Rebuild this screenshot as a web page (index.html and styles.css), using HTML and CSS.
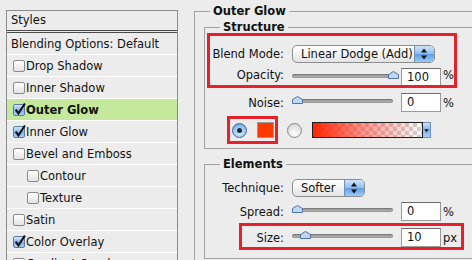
FILE: index.html
```html
<!DOCTYPE html>
<html lang="en">
<head>
  <meta charset="UTF-8">
  <title>Layer Style</title>
  <link rel="stylesheet" href="styles.css">
</head>
<body>
<div class="window">
  <div class="styles-panel">
    <div class="panel-head">Styles</div>
    <ul class="style-list">
      <li class="plain">Blending Options: Default</li>
      <li><span class="check"></span>Drop Shadow</li>
      <li><span class="check"></span>Inner Shadow</li>
      <li class="active"><span class="check on"><svg viewBox="0 0 12 12"><path d="M2.5 6.2 L5 9.6 L11 0.5"/></svg></span>Outer Glow</li>
      <li><span class="check on"><svg viewBox="0 0 12 12"><path d="M2.5 6.2 L5 9.6 L11 0.5"/></svg></span>Inner Glow</li>
      <li><span class="check"></span>Bevel and Emboss</li>
      <li class="sub"><span class="check"></span>Contour</li>
      <li class="sub"><span class="check"></span>Texture</li>
      <li><span class="check"></span>Satin</li>
      <li><span class="check on"><svg viewBox="0 0 12 12"><path d="M2.5 6.2 L5 9.6 L11 0.5"/></svg></span>Color Overlay</li>
      <li><span class="check"></span>Gradient Overlay</li>
      <li><span class="check"></span>Pattern Overlay</li>
      <li><span class="check"></span>Stroke</li>
    </ul>
  </div>

  <div class="settings">
    <fieldset class="group outer">
      <legend>Outer Glow</legend>

      <fieldset class="group inner structure">
        <legend>Structure</legend>

        <div class="mark mark-blend">
          <div class="row first">
            <label class="lbl">Blend Mode:</label>
            <div class="select blend">
              <span class="select-text">Linear Dodge (Add)</span>
              <span class="stepper"><svg viewBox="0 0 18 16"><path d="M6 6.5 L9 2.5 L12 6.5 Z"/><path d="M6 9.5 L9 13.5 L12 9.5 Z"/></svg></span>
            </div>
          </div>
          <div class="row short">
            <label class="lbl">Opacity:</label>
            <div class="slider"><div class="track"></div><svg class="thumb" style="left:96px" viewBox="0 0 11 8"><path d="M0.5 3.5 L5.5 0.5 L10.5 3.5 L10.5 7.5 L0.5 7.5 Z"/></svg></div>
            <div class="num">100</div><span class="unit">%</span>
          </div>
        </div>

        <div class="row noise">
          <label class="lbl">Noise:</label>
          <div class="slider"><div class="track"></div><svg class="thumb" style="left:0px" viewBox="0 0 11 8"><path d="M0.5 3.5 L5.5 0.5 L10.5 3.5 L10.5 7.5 L0.5 7.5 Z"/></svg></div>
          <div class="num">0</div><span class="unit">%</span>
        </div>

        <div class="color-row">
          <div class="mark mark-color">
            <span class="radio on"></span>
            <span class="swatch"></span>
          </div>
          <span class="radio"></span>
          <div class="gradient"></div>
          <span class="grad-arrow"><svg viewBox="0 0 8 16"><path d="M1.5 7 L6.5 7 L4 10.5 Z"/></svg></span>
        </div>
      </fieldset>

      <fieldset class="group inner elements">
        <legend>Elements</legend>

        <div class="row technique">
          <label class="lbl">Technique:</label>
          <div class="select softer">
            <span class="select-text">Softer</span>
            <span class="stepper"><svg viewBox="0 0 18 16"><path d="M6 6.5 L9 2.5 L12 6.5 Z"/><path d="M6 9.5 L9 13.5 L12 9.5 Z"/></svg></span>
          </div>
        </div>

        <div class="row spread">
          <label class="lbl">Spread:</label>
          <div class="slider"><div class="track"></div><svg class="thumb" style="left:0px" viewBox="0 0 11 8"><path d="M0.5 3.5 L5.5 0.5 L10.5 3.5 L10.5 7.5 L0.5 7.5 Z"/></svg></div>
          <div class="num">0</div><span class="unit">%</span>
        </div>

        <div class="mark mark-size">
          <div class="row">
            <label class="lbl">Size:</label>
            <div class="slider"><div class="track"></div><svg class="thumb" style="left:8px" viewBox="0 0 11 8"><path d="M0.5 3.5 L5.5 0.5 L10.5 3.5 L10.5 7.5 L0.5 7.5 Z"/></svg></div>
            <div class="num">10</div><span class="unit">px</span>
          </div>
        </div>
      </fieldset>
    </fieldset>
  </div>
</div>
</body>
</html>
```

FILE: styles.css
```css
html, body {
  margin: 0;
  height: 260px;
  overflow: hidden;
}

body {
  background: #ececec;
  font-family: "DejaVu Sans", sans-serif;
  font-size: 11.5px;
  color: #111;
}

.window {
  display: flex;
  align-items: flex-start;
}

/* left list of styles */
.styles-panel {
  width: 172px;
  box-sizing: border-box;
  margin: 10px 0 0 6px;
  border: 1px solid #8c8c8c;
  flex-shrink: 0;
}

.panel-head {
  height: 19px;
  line-height: 19px;
  padding-left: 4px;
  border-bottom: 3px double #4a4a4a;
}

.style-list {
  list-style-type: none;
  margin: 0;
  padding: 0;
}

.style-list li {
  display: flex;
  align-items: center;
  height: 21px;
  border-bottom: 1px solid #fff;
  padding-left: 6px;
  white-space: nowrap;
  overflow: hidden;
}

.style-list li.plain {
  padding-left: 4px;
}

.style-list li.sub {
  padding-left: 20px;
}

.style-list li.active {
  background: #c5e99c;
  font-weight: bold;
}

.check {
  width: 12px;
  height: 12px;
  box-sizing: border-box;
  margin-right: 1px;
  border: 1px solid #8a8a8a;
  border-radius: 2px;
  background: linear-gradient(#ffffff, #e2e2e2);
  flex-shrink: 0;
  position: relative;
}

.check.on {
  background: linear-gradient(#d3e6fa, #7fb3ea 55%, #a9cdf3);
  border-color: #5a7ba6;
}

.check svg {
  position: absolute;
  left: -1px;
  top: -2px;
  width: 13px;
  height: 13px;
  overflow: visible;
}

.check svg path {
  fill: none;
  stroke: #111;
  stroke-width: 1.9;
}

/* right settings */
.settings {
  flex: 1;
  min-width: 0;
  overflow: hidden;
}

.group {
  border: 1px solid #a2a2a2;
  margin: 0;
  padding: 0;
  min-width: 0;
}

.group legend {
  font-weight: bold;
  line-height: 14px;
  padding: 0 3px;
  margin-left: 15px;
}

.outer {
  margin: 4px -40px 0 16px;
  min-height: 300px;
}

.inner {
  margin: 0 -20px 0 9px;
}

.structure {
  margin-top: 2px;
  padding-bottom: 4px;
}

.elements {
  margin-top: 8px;
  padding-bottom: 8px;
}

.mark {
  border: 3px solid #e5212b;
  box-sizing: border-box;
}

.mark-blend {
  width: 250px;
  height: 55px;
  margin: -1px 0 0 2px;
}

.mark-size {
  width: 225px;
  height: 27px;
  margin: 2px 0 0 34px;
  padding-top: 2px;
}

.row {
  display: flex;
  align-items: center;
  height: 19px;
}

.lbl {
  width: 79px;
  margin-right: 8px;
  text-align: right;
  white-space: nowrap;
  flex-shrink: 0;
}

.mark-blend .lbl {
  width: 74px;
}

.mark-size .lbl {
  width: 42px;
}

.mark-blend .row.first {
  height: 20px;
  margin-top: 8px;
}

.mark-blend .row.short {
  height: 17px;
  margin-top: 4px;
  align-items: flex-start;
}

.noise {
  margin-top: 5px;
}

.technique {
  margin-top: 7px;
}

.spread {
  margin-top: 5px;
}

/* popup menus */
.select {
  display: flex;
  height: 18px;
  box-sizing: border-box;
  border: 1px solid #8d8d8d;
  border-radius: 5px;
  background: linear-gradient(#ffffff, #f3f3f3 50%, #e3e3e3);
  overflow: hidden;
}

.select.blend {
  width: 143px;
}

.select.softer {
  width: 73px;
}

.select-text {
  flex: 1;
  padding-left: 8px;
  line-height: 16px;
  white-space: nowrap;
}

.stepper {
  width: 19px;
  border-left: 1px solid #6f90bd;
  background: linear-gradient(#cfe3f9, #8cbcef 50%, #5f9ee6 51%, #9ccaf6);
}

.stepper svg {
  display: block;
  width: 18px;
  height: 16px;
}

.stepper path {
  fill: #111;
}

/* sliders and number fields */
.slider {
  position: relative;
  width: 101px;
  height: 17px;
  margin-right: 8px;
  flex-shrink: 0;
  align-self: flex-start;
}

.track {
  margin-top: 6px;
  height: 4px;
  border-radius: 2px;
  background: linear-gradient(#8a8a8a, #bdbdbd);
  box-shadow: inset 0 0 0 1px rgba(0, 0, 0, 0.15);
}

.thumb {
  position: absolute;
  top: 3px;
  width: 11px;
  height: 8px;
}

.thumb path {
  fill: #bcd8f5;
  stroke: #4f73a3;
  stroke-width: 1;
}

.num {
  width: 40px;
  height: 19px;
  box-sizing: border-box;
  border: 1px solid #9a9a9a;
  border-top-color: #6c6c6c;
  background: #fff;
  padding-left: 5px;
  line-height: 17px;
  flex-shrink: 0;
}

.mark-blend .num {
  height: 17px;
  line-height: 16px;
  border-bottom: none;
}

.unit {
  margin-left: 2px;
}

/* color row */
.color-row {
  display: flex;
  align-items: center;
  margin-top: 4px;
}

.mark-color {
  display: flex;
  align-items: center;
  width: 51px;
  height: 28px;
  margin-left: 22px;
}

.radio {
  width: 15px;
  height: 15px;
  box-sizing: border-box;
  border-radius: 50%;
  border: 1px solid #8a8a8a;
  background: radial-gradient(circle at 50% 70%, #ffffff, #dcdcdc 70%, #c4c4c4);
  flex-shrink: 0;
  margin-left: 9px;
  position: relative;
}

.mark-color .radio {
  margin-left: 2px;
}

.radio.on {
  border-color: #46699a;
  background: radial-gradient(circle at 50% 65%, #e4f0fc, #8fc0f0 60%, #3d7fd0);
}

.radio.on::after {
  content: "";
  position: absolute;
  left: 4px;
  top: 4px;
  width: 5px;
  height: 5px;
  border-radius: 50%;
  background: #1b2a3e;
}

.swatch {
  width: 17px;
  height: 16px;
  box-sizing: border-box;
  margin-left: 10px;
  border: 1px solid #999;
  background: #ff3a00;
}

.gradient {
  width: 111px;
  height: 16px;
  box-sizing: border-box;
  margin-left: 10px;
  border: 1px solid #1e1e1e;
  background:
    linear-gradient(to right, #ff2400, rgba(255, 60, 40, 0.55) 45%, rgba(255, 80, 60, 0) 100%),
    conic-gradient(#cfcfcf 25%, #ffffff 0 50%, #cfcfcf 0 75%, #ffffff 0) 0 0 / 8px 8px;
}

.grad-arrow {
  width: 8px;
  height: 16px;
  box-sizing: border-box;
  border: 1px solid #6f90bd;
  border-left: none;
  background: linear-gradient(#cfe3f9, #7fb4ec 50%, #a6cff7);
}

.grad-arrow svg {
  display: block;
  width: 7px;
  height: 14px;
}

.grad-arrow path {
  fill: #111;
}
```
